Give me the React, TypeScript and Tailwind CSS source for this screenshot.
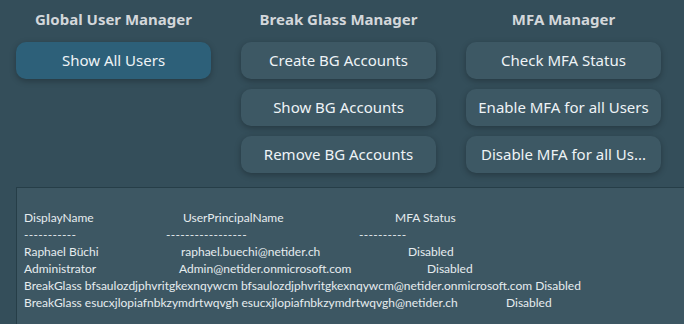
import React from "react";

const font = { fontFamily: '"Noto Sans", "Open Sans", sans-serif' };
const mono = { fontFamily: 'Lato, "Noto Sans", sans-serif' };

function Btn({ label, active = false }: { label: string; active?: boolean }) {
  return (
    <div
      className={
        "h-[37px] w-[195px] rounded-[10px] flex items-center justify-center text-[15px] text-[#eef3f6] shadow-[0_2px_6px_rgba(0,0,0,0.28)] whitespace-nowrap " +
        (active ? "bg-[#2d6079]" : "bg-[#3d5864]")
      }
    >
      {label}
    </div>
  );
}

function Col({ title, children }: { title: string; children: React.ReactNode }) {
  return (
    <div className="w-[195px] flex flex-col">
      <div className="h-[42px] flex items-center justify-center pb-[4px] text-[15px] font-bold text-[#d3d7da]">
        {title}
      </div>
      <div className="flex flex-col gap-[10px]">{children}</div>
    </div>
  );
}

export default function App() {
  return (
    <div
      className="w-[684px] h-[324px] overflow-hidden bg-[#344e5a] flex flex-col"
      style={font}
    >
      <div className="flex gap-[30px] pl-[16px]">
        <Col title="Global User Manager">
          <Btn label="Show All Users" active />
        </Col>
        <Col title="Break Glass Manager">
          <Btn label="Create BG Accounts" />
          <Btn label="Show BG Accounts" />
          <Btn label="Remove BG Accounts" />
        </Col>
        <Col title="MFA Manager">
          <Btn label="Check MFA Status" />
          <Btn label="Enable MFA for all Users" />
          <Btn label="Disable MFA for all Us..." />
        </Col>
      </div>
      <div
        className="mt-[14px] ml-[16px] w-[700px] flex-1 bg-[#3d5763] border-t border-l border-[#263e48] pt-[21px] pl-[7px] text-[12px] leading-[17px] text-[#e6ecef] whitespace-nowrap"
        style={mono}
      >
        <div className="flex">
          <span className="w-[159px] shrink-0">DisplayName</span>
          <span className="w-[212px] shrink-0">UserPrincipalName</span>
          <span>MFA Status</span>
        </div>
        <div className="flex">
          <span className="w-[142px] shrink-0 tracking-[0.3px]">-----------</span>
          <span className="w-[193px] shrink-0 tracking-[0.3px]">-----------------</span>
          <span className="tracking-[0.3px]">----------</span>
        </div>
        <div className="flex">
          <span className="w-[157px] shrink-0">Raphael Büchi</span>
          <span className="w-[227px] shrink-0">raphael.buechi@netider.ch</span>
          <span>Disabled</span>
        </div>
        <div className="flex">
          <span className="w-[155px] shrink-0">Administrator</span>
          <span className="w-[248px] shrink-0">Admin@netider.onmicrosoft.com</span>
          <span>Disabled</span>
        </div>
        <div className="flex">
          <span>
            BreakGlass bfsaulozdjphvritgkexnqywcm bfsaulozdjphvritgkexnqywcm@netider.onmicrosoft.com Disabled
          </span>
        </div>
        <div className="flex">
          <span className="w-[482px] shrink-0">
            BreakGlass esucxjlopiafnbkzymdrtwqvgh esucxjlopiafnbkzymdrtwqvgh@netider.ch
          </span>
          <span>Disabled</span>
        </div>
      </div>
    </div>
  );
}
